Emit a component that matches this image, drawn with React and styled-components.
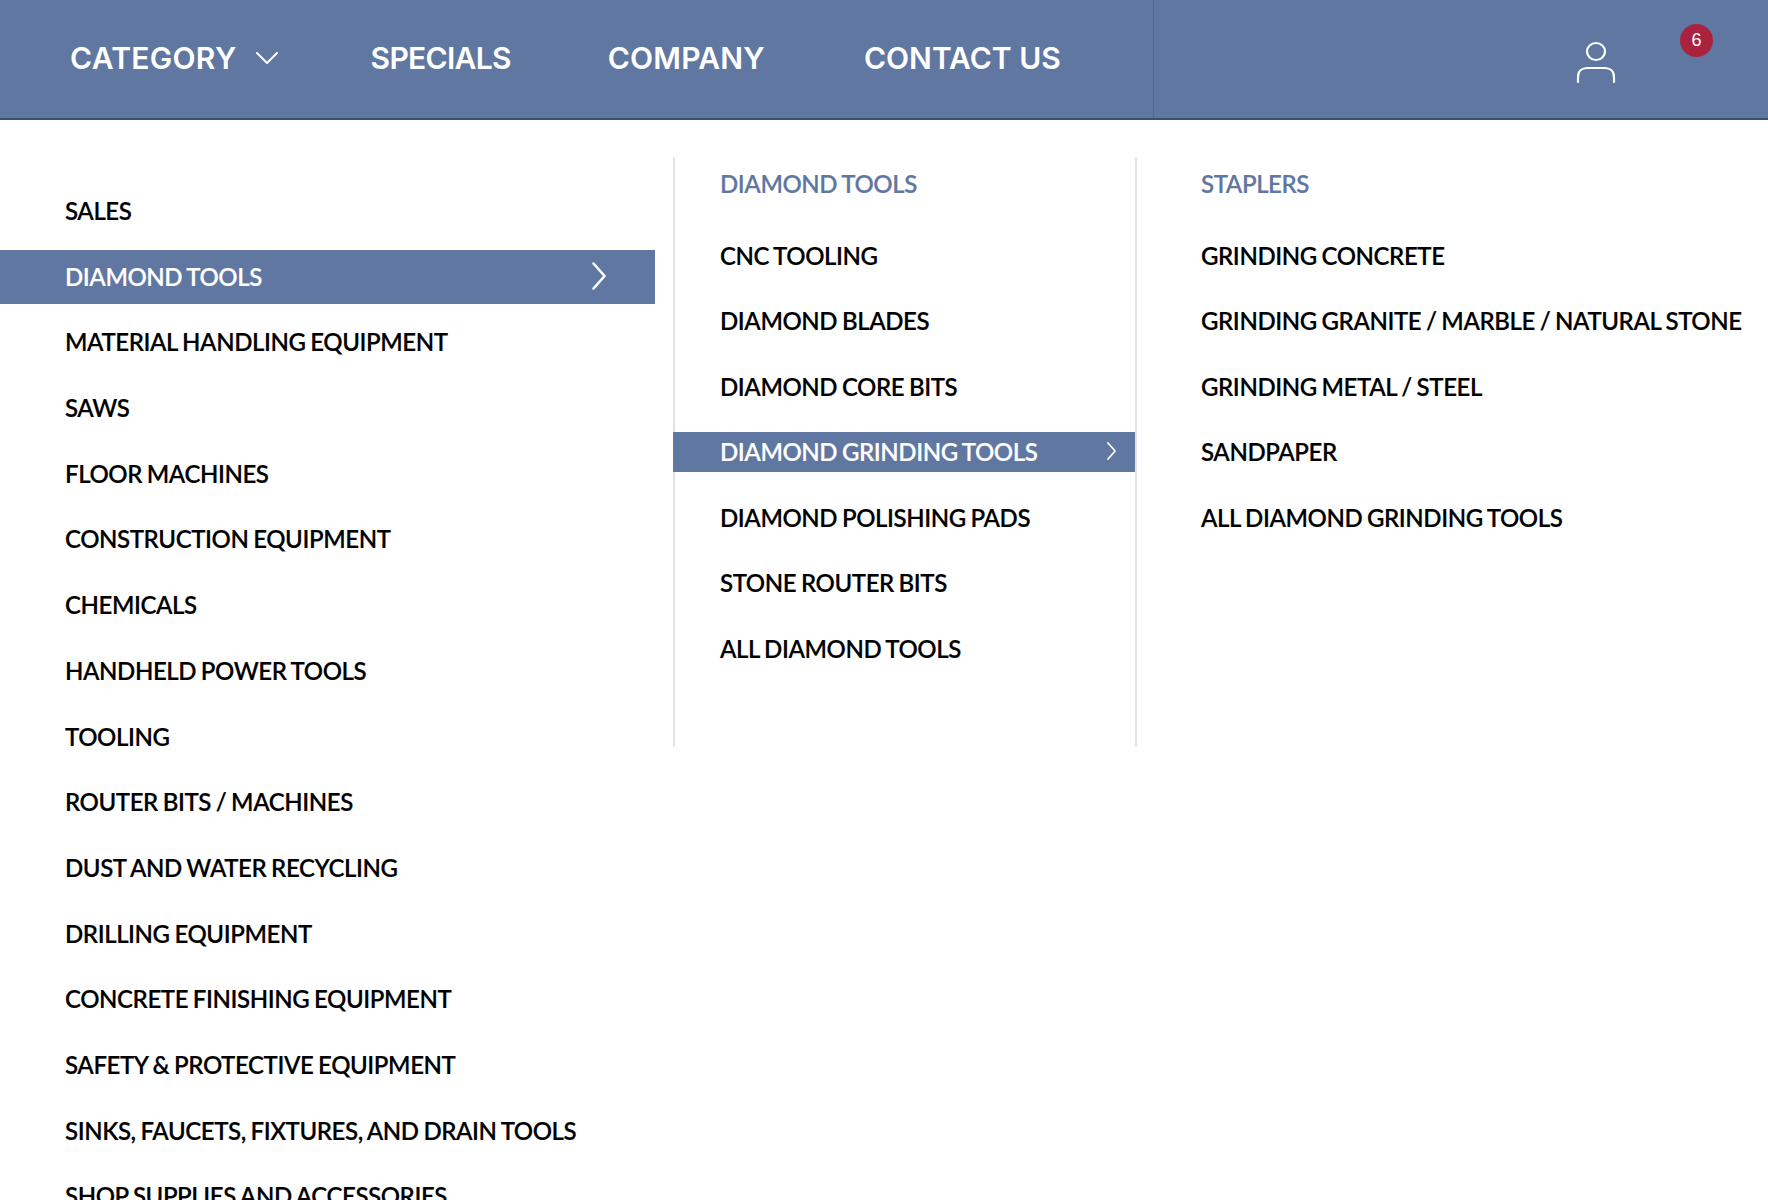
import React from "react";
import styled, { createGlobalStyle } from "styled-components";

const BLUE = "#5f77a1";

const GlobalStyle = createGlobalStyle`
  html, body {
    margin: 0;
    height: 1200px;
    overflow: hidden;
    background: #fff;
    font-family: "Lato", "Liberation Sans", sans-serif;
  }
`;

const primaryItems = [
  "SALES",
  "DIAMOND TOOLS",
  "MATERIAL HANDLING EQUIPMENT",
  "SAWS",
  "FLOOR MACHINES",
  "CONSTRUCTION EQUIPMENT",
  "CHEMICALS",
  "HANDHELD POWER TOOLS",
  "TOOLING",
  "ROUTER BITS / MACHINES",
  "DUST AND WATER RECYCLING",
  "DRILLING EQUIPMENT",
  "CONCRETE FINISHING EQUIPMENT",
  "SAFETY & PROTECTIVE EQUIPMENT",
  "SINKS, FAUCETS, FIXTURES, AND DRAIN TOOLS",
  "SHOP SUPPLIES AND ACCESSORIES",
];

const toolItems = [
  "CNC TOOLING",
  "DIAMOND BLADES",
  "DIAMOND CORE BITS",
  "DIAMOND GRINDING TOOLS",
  "DIAMOND POLISHING PADS",
  "STONE ROUTER BITS",
  "ALL DIAMOND TOOLS",
];

const grindingItems = [
  "GRINDING CONCRETE",
  "GRINDING GRANITE / MARBLE / NATURAL STONE",
  "GRINDING METAL / STEEL",
  "SANDPAPER",
  "ALL DIAMOND GRINDING TOOLS",
];

const Header = styled.header`
  height: 118px;
  background: ${BLUE};
  border-bottom: 2px solid #34507f;
  display: flex;
`;

const Nav = styled.nav`
  width: 1154px;
  height: 118px;
  border-right: 1px solid #526a94;
  display: flex;
  align-items: center;
  padding: 0 0 2px 70px;
  box-sizing: border-box;
`;

const NavLink = styled.a`
  display: flex;
  align-items: center;
  gap: 18px;
  margin-right: ${(p) => p.$gap}px;
  color: #fff;
  font-family: "Inter", "Open Sans", sans-serif;
  font-size: 30px;
  font-weight: 600;
  letter-spacing: ${(p) => p.$tracking || 0}px;
  line-height: 1;
`;

const HeaderRight = styled.div`
  flex: 1;
  display: flex;
  align-items: flex-start;
  gap: 64px;
  padding: 24px 0 0 422px;
`;

const UserIcon = styled.svg`
  margin-top: 16px;
  flex: none;
`;

const Badge = styled.span`
  width: 33px;
  height: 33px;
  flex: none;
  border-radius: 50%;
  background: #a9233f;
  color: #fff;
  font-family: "Liberation Sans", sans-serif;
  font-size: 18px;
  display: flex;
  align-items: center;
  justify-content: center;
`;

const Menu = styled.div`
  display: flex;
  align-items: flex-start;
`;

const PrimaryColumn = styled.ul`
  list-style: none;
  margin: 0 18px 0 0;
  padding: 64px 0 0;
  width: 655px;
  flex: none;
`;

const PrimaryItem = styled.li`
  height: 54px;
  margin-bottom: 11.7px;
  padding: 0 49px 1px 65px;
  box-sizing: border-box;
  display: flex;
  align-items: center;
  justify-content: space-between;
  background: ${(p) => (p.$active ? BLUE : "transparent")};
  color: ${(p) => (p.$active ? "#fff" : "#000")};
  font-size: 24px;
  font-weight: 600;
  letter-spacing: -0.42px;
  word-spacing: -0.8px;
  -webkit-text-stroke: 0.15px currentColor;
  white-space: nowrap;
`;

const SubColumn = styled.div`
  margin-top: 37px;
  height: 590px;
  flex: none;
  width: ${(p) => p.$width}px;
  border-left: 2px solid #e4e4e4;
  box-sizing: border-box;
`;

const SubTitle = styled.h3`
  margin: 7px 0 31px;
  padding-left: ${(p) => p.$indent}px;
  height: 40px;
  line-height: 40px;
  color: ${BLUE};
  font-size: 24px;
  font-weight: 600;
  letter-spacing: -0.42px;
  word-spacing: -0.8px;
  -webkit-text-stroke: 0.15px currentColor;
`;

const SubList = styled.ul`
  list-style: none;
  margin: 0;
  padding: 0;
`;

const SubItem = styled.li`
  height: 40px;
  margin: 0 -2px 25.6px -2px;
  padding: 0 21px 0 ${(p) => p.$indent + 2}px;
  display: flex;
  align-items: center;
  justify-content: space-between;
  background: ${(p) => (p.$active ? BLUE : "transparent")};
  color: ${(p) => (p.$active ? "#fff" : "#000")};
  font-size: 24px;
  font-weight: 600;
  letter-spacing: -0.42px;
  word-spacing: -0.8px;
  -webkit-text-stroke: 0.15px currentColor;
  white-space: nowrap;
`;

const ChevronIcon = styled.svg`
  flex: none;
  margin-bottom: ${(p) => p.$lift || 0}px;
`;

const Chevron = ({ size, width = 2, lift }) => (
  <ChevronIcon $lift={lift} width={size} height={size * 2} viewBox="0 0 10 20" fill="none" stroke="#fff" strokeWidth={width} strokeLinecap="round" strokeLinejoin="round">
    <polyline points="1,1 9,10 1,19" vectorEffect="non-scaling-stroke" />
  </ChevronIcon>
);

export default function App() {
  return (
    <>
      <GlobalStyle />
      <Header>
        <Nav>
          <NavLink $gap={92} $tracking={0.3}>
            CATEGORY
            <svg width="24" height="14" viewBox="0 0 24 14" fill="none" stroke="#fff" strokeWidth="2" strokeLinecap="round" strokeLinejoin="round">
              <polyline points="2,2 12,12 22,2" />
            </svg>
          </NavLink>
          <NavLink $gap={97} $tracking={-0.7}>SPECIALS</NavLink>
          <NavLink $gap={99} $tracking={0.2}>COMPANY</NavLink>
          <NavLink $gap={0}>CONTACT US</NavLink>
        </Nav>
        <HeaderRight>
          <UserIcon width="40" height="44" viewBox="0 0 40 44" fill="none" stroke="#fff" strokeWidth="2.2" strokeLinecap="round">
            <ellipse cx="20" cy="11.5" rx="9" ry="8.5" />
            <path d="M2 42 V37 C2 31 6 28 11 28 H29 C34 28 38 31 38 37 V42" />
          </UserIcon>
          <Badge>6</Badge>
        </HeaderRight>
      </Header>
      <Menu>
        <PrimaryColumn>
          {primaryItems.map((item) => (
            <PrimaryItem key={item} $active={item === "DIAMOND TOOLS"}>
              {item}
              {item === "DIAMOND TOOLS" && <Chevron size={14} width={2.4} />}
            </PrimaryItem>
          ))}
        </PrimaryColumn>
        <SubColumn $width={462}>
          <SubTitle $indent={45}>DIAMOND TOOLS</SubTitle>
          <SubList>
            {toolItems.map((item) => (
              <SubItem key={item} $indent={45} $active={item === "DIAMOND GRINDING TOOLS"}>
                {item}
                {item === "DIAMOND GRINDING TOOLS" && <Chevron size={9} width={1.6} lift={2} />}
              </SubItem>
            ))}
          </SubList>
        </SubColumn>
        <SubColumn $width={633}>
          <SubTitle $indent={64}>STAPLERS</SubTitle>
          <SubList>
            {grindingItems.map((item) => (
              <SubItem key={item} $indent={64}>
                {item}
              </SubItem>
            ))}
          </SubList>
        </SubColumn>
      </Menu>
    </>
  );
}
